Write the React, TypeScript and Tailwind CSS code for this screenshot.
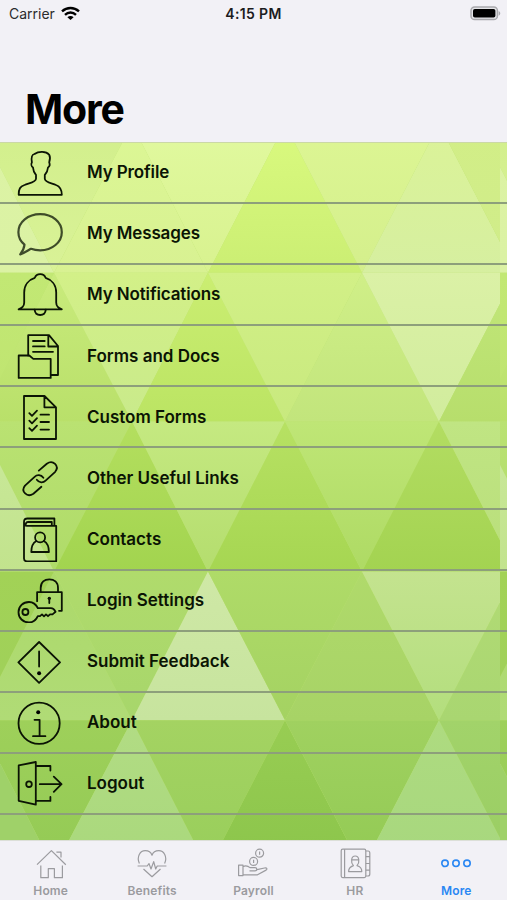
import { ReactNode } from 'react';

type Tri = [string, string, string];

// triangles of the mosaic: points, top colour, bottom colour
const tris: Tri[] = [
  ['-22,123 132,123 54,272', '#d2ef8c', '#d9f297'],
  ['-22,123 -99,272 54,272', '#dcf3a4', '#dbf2a4'],
  ['132,123 54,272 208,272', '#dcf795', '#d8f192'],
  ['132,123 285,123 208,272', '#e1f99f', '#d8f28f'],
  ['285,123 208,272 362,272', '#dafa7f', '#cbee73'],
  ['285,123 439,123 362,272', '#ddf694', '#d4ef8c'],
  ['439,123 362,272 516,272', '#dbf398', '#d6efa0'],
  ['439,123 593,123 516,272', '#d2ee87', '#d0ec8a'],
  ['54,272 -22,421 132,421', '#c9eb7c', '#b9e06a'],
  ['-22,272 54,272 -22,421', '#c2e874', '#bfe470'],
  ['54,272 208,272 132,421', '#d3f088', '#c9ea8b'],
  ['208,272 132,421 285,421', '#cbee72', '#bbe463'],
  ['208,272 362,272 285,421', '#d2f087', '#c8e97e'],
  ['362,272 285,421 439,421', '#d0ef88', '#c2e57c'],
  ['362,272 516,272 439,421', '#dbf1a6', '#d1ec9d'],
  ['516,272 439,421 593,421', '#c2e77a', '#b7de6c'],
  ['-22,421 132,421 54,571', '#bae272', '#afdb69'],
  ['-22,421 -99,571 54,571', '#cae99b', '#c2e38d'],
  ['132,421 54,571 208,571', '#b4df5f', '#a2d44f'],
  ['132,421 285,421 208,571', '#c5e981', '#b4dd6e'],
  ['285,421 208,571 362,571', '#b7e163', '#a6d652'],
  ['285,421 439,421 362,571', '#bfe676', '#aeda64'],
  ['439,421 362,571 516,571', '#b3dd62', '#a3d351'],
  ['439,421 593,421 516,571', '#c0e583', '#b9de7b'],
  ['54,571 -22,720 132,720', '#acd96a', '#b0db76'],
  ['-99,571 54,571 -22,720', '#a2d256', '#9fd05b'],
  ['54,571 208,571 132,720', '#b0db6c', '#a7d66b'],
  ['208,571 132,720 285,720', '#cfe8a6', '#c7e49e'],
  ['208,571 362,571 285,720', '#afdb68', '#a4d262'],
  ['362,571 285,720 439,720', '#b0da6b', '#a7d366'],
  ['362,571 516,571 439,720', '#c4e38f', '#b3de7d'],
  ['516,571 439,720 593,720', '#b2db75', '#a9d671'],
  ['-22,720 132,720 54,869', '#9ed05a', '#93ca55'],
  ['-22,720 -99,869 54,869', '#9fd169', '#9fd169'],
  ['132,720 54,869 208,869', '#b2dc84', '#a9d87c'],
  ['132,720 285,720 208,869', '#a4d362', '#98ce5b'],
  ['285,720 208,869 362,869', '#98cd53', '#8bc54b'],
  ['285,720 439,720 362,869', '#a0d160', '#92ca54'],
  ['439,720 362,869 516,869', '#aedb80', '#a7d77e'],
  ['439,720 593,720 516,869', '#a2d36a', '#99cd63'],
];

function Mosaic() {
  return (
    <svg className="absolute inset-0 h-full w-full" viewBox="0 142 507 698" preserveAspectRatio="none" aria-hidden="true">
      <defs>
        {tris.map(([, from, to], i) => (
          <linearGradient key={i} id={`g${i}`} x1="0" y1="0" x2="0" y2="1">
            <stop offset="0" stopColor={from} />
            <stop offset="1" stopColor={to} />
          </linearGradient>
        ))}
        <clipPath id="tile">
          <rect x="0" y="123" width="500" height="746" />
        </clipPath>
        <g id="mosaic" clipPath="url(#tile)">
          {tris.map(([points], i) => (
            <polygon key={i} points={points} fill={`url(#g${i})`} />
          ))}
        </g>
      </defs>
      <rect x="0" y="123" width="507" height="746" fill="#bce26f" />
      <use href="#mosaic" />
      <use href="#mosaic" x="500" />
    </svg>
  );
}

const items: { label: string; icon: ReactNode }[] = [
  {
    label: 'My Profile',
    icon: (
      <path d="M1.7 44.8C1.7 39 3 36.6 7.5 35C12 33.2 19 32.4 19 28.8V25C17 23 16.2 20.5 16 17.5C14.3 16.5 14 14 14.9 12.4C13.8 6 15.2 4.7 17.5 4C21.5 1.2 29 .9 32.2 4.8C33.4 7 33 10 32.2 12.4C33 14.4 32.5 16.6 31 17.5C30.7 20.6 29.6 23.2 27.8 25V28.8C27.8 32.4 35 33.2 39 35C43.4 36.7 44.8 39.3 44.8 44.8Z" />
    ),
  },
  {
    label: 'My Messages',
    icon: (
      <path className="opacity-75" strokeWidth="2.2" d="M7.5 33.6C3.5 30.3 1.4 26 1.4 21.2C1.4 11.2 11 3.2 23.2 3.2S44.8 11.2 44.8 21.2S35.2 39.3 23.2 39.3C19.7 39.3 16.7 38.8 14 37.8C11.2 39.3 7.6 41.9 3.2 43.4C5.8 40 7.2 37 7.5 33.6Z" />
    ),
  },
  {
    label: 'My Notifications',
    icon: (
      <>
        <path d="M1.6 37.3H44.8C41.5 35.7 39.2 34.6 39.2 30.5V20.5C39.2 12.8 34.5 7.6 28.6 5.8C27.6 3.2 25.8 2.2 23.2 2.2S18.8 3.2 17.8 5.8C11.9 7.6 7.2 12.8 7.2 20.5V30.5C7.2 34.6 4.9 35.7 1.6 37.3Z" />
        <path d="M17.6 37.6C18 41.2 20 43 23.2 43S28.4 41.2 28.8 37.6" />
      </>
    ),
  },
  {
    label: 'Forms and Docs',
    icon: (
      <>
        <path d="M11.2 22.5V2.2H32L41 13V42H34M31.3 2.2V13.5H41M16 8H27.7M16 13.4H27.7M16 18.8H36" />
        <path d="M1.7 22.5H12.3L16.3 25.9H33.7V44.9H1.7Z" />
      </>
    ),
  },
  {
    label: 'Custom Forms',
    icon: (
      <path d="M7 2H27.5L39 13.3V45H7ZM27.4 2V13.3H39M12.3 19.2L15 21.8L20 16.7M12.3 26.7L15 29.3L20 24.2M12.3 34.2L15 36.8L20 31.7M23.5 20.7H32M23.5 28H32M23.5 35.6H32" />
    ),
  },
  {
    label: 'Other Useful Links',
    icon: (
      <>
        <path d="M21.8 15.6L29.8 8.7C36 4.3 42.8 11 38.2 16.8L28.6 25.6C26.2 28 22.2 28 19.8 24.7" />
        <path transform="rotate(180 23.1 23.7)" d="M21.8 15.6L29.8 8.7C36 4.3 42.8 11 38.2 16.8L28.6 25.6C26.2 28 22.2 28 19.8 24.7" />
      </>
    ),
  },
  {
    label: 'Contacts',
    icon: (
      <>
        <path d="M37.4 9.8V2.5H10.5C8.2 2.5 7 4 7 6V42.5C7 44.3 8 45.3 10 45.3H39.2V9.8H10C8 9.8 7 8.8 7 7M34.8 9.6V6H11C9.5 6 8.8 6.8 9 8" />
        <circle cx="23.1" cy="21.4" r="5" />
        <path d="M19.4 25C16.4 26.6 14.3 30.2 14.3 36H31.9C31.9 30.2 29.8 26.6 26.8 25" />
      </>
    ),
  },
  {
    label: 'Login Settings',
    icon: (
      <>
        <path d="M23.7 15V11C23.7 5 27.5 2.3 32.3 2.3S41 5 41 11V15M20.1 24.2V15.2H44.8V33.8H42" />
        <circle cx="32.3" cy="21.3" r="1.6" fill="#000" stroke="none" />
        <path d="M32.3 21V26" />
        <circle cx="8.4" cy="35" r="3" />
        <path d="M20.8 31.2C19 27.3 15.7 25 12 25C6 25 1.5 29.5 1.5 35.2S6 45.5 12 45.5C15.8 45.5 19 43.2 20.8 39.2H23L25 37.4L27 39.4L29 37.4L31 39.2L33 37.4H35.5L38.6 34.8C37 31.8 35.6 31.2 34 31.2Z" />
      </>
    ),
  },
  {
    label: 'Submit Feedback',
    icon: (
      <>
        <path d="M22.1 4L43 24.4L22.1 44.8L1.4 24.4ZM22.1 13.4V28.6" />
        <circle cx="22.1" cy="35.2" r="2" fill="#000" stroke="none" />
      </>
    ),
  },
  {
    label: 'About',
    icon: (
      <>
        <circle cx="22.1" cy="24.2" r="20.6" />
        <path d="M17.5 20.8H22.6V37.2M16 37.2H28.4" />
        <circle cx="21.2" cy="13.2" r="2" fill="#000" stroke="none" />
      </>
    ),
  },
  {
    label: 'Logout',
    icon: (
      <>
        <path d="M1.7 5.4L18.8 2V44.7L1.7 40.8ZM18.8 6H33.4V10.6M18.8 40.9H33.4V37M22.8 24.2H44.5M36.8 16.6L44.5 24.2L36.8 31.8" />
        <circle cx="12" cy="24.2" r="2.8" />
      </>
    ),
  },
];

const tabs: { label: string; icon: ReactNode; active?: boolean }[] = [
  {
    label: 'Home',
    icon: (
      <path d="M2 17.6L16.4 3.6L30.8 17.8M21.4 5.2H26V10.4M5.8 18.6V30.7H13.3V21.7H19.4V30.7H27.4V18.6" />
    ),
  },
  {
    label: 'Benefits',
    icon: (
      <>
        <path d="M3.4 16.5C.3 9.5 4.2 3.7 9.2 3.7C12.5 3.7 15 5.4 16 8.2C17 5.4 19.5 3.7 22.8 3.7C27.8 3.7 31.7 9.5 28.6 16.5M7.5 22L16 29.7L24.5 22" />
        <path d="M1.6 19H11.2L13 16.6L15 22L17.7 14.6L19.7 22L21.2 19H30.4" />
      </>
    ),
  },
  {
    label: 'Payroll',
    icon: (
      <>
        <circle cx="22.6" cy="6.2" r="4" />
        <circle cx="16.6" cy="14.4" r="4" />
        <path d="M22.6 4.6V7.8M16.6 12.8V16" />
        <path d="M1.6 18.2H6V28.6H1.6ZM6 19.6C9 18.2 11 19 13 20.6H18C20.4 20.6 20.4 23.8 18 23.8H12.5M20 22.6L27.5 21C30.3 20.6 30.6 22.4 28.6 23.4L20.5 27.8H6" />
      </>
    ),
  },
  {
    label: 'HR',
    icon: (
      <>
        <rect x="2.2" y="2.2" width="24.6" height="28.4" rx="1.5" />
        <path d="M5.6 2.2V30.6M26.8 4H29C30.3 4 30.8 4.8 30.8 6V9.6H26.8M30.8 9.6V16.5H26.8M30.8 16.5V23.2H26.8M30.8 23.2V27C30.8 28.4 30.2 29 29 29H26.8" />
        <path d="M9.6 24.6C9.6 20.6 11.5 19.6 14.4 18.6C11.5 15.6 12 9 16.2 9S20.9 15.6 18 18.6C21 19.6 22.8 20.6 22.8 24.6ZM12.6 12.8H19.8" />
      </>
    ),
  },
  {
    label: 'More',
    active: true,
    icon: (
      <g strokeWidth="1.6">
        <circle cx="5" cy="16.3" r="3.2" />
        <circle cx="16" cy="16.3" r="3.2" />
        <circle cx="27" cy="16.3" r="3.2" />
      </g>
    ),
  },
];

export default function App() {
  return (
    <div className="flex h-[900px] w-[507px] flex-col overflow-hidden bg-[#f2f1f6] font-['Inter',sans-serif] text-black">
      <header className="flex h-[142px] shrink-0 flex-col justify-between">
        <div className="grid h-[26px] grid-cols-3 items-center pl-[9px] pr-[6px] text-[14px]">
          <div className="flex items-center gap-1.5 text-[#2b2b2d]">
            <span>Carrier</span>
            <svg width="19" height="15" viewBox="0 0 19 15" fill="none" stroke="#000" strokeWidth="2.4" aria-hidden="true">
              <path d="M1 5.4C6 .8 13 .8 18 5.4M4 8.8C7.2 5.8 11.8 5.8 15 8.8" />
              <path d="M9.5 14L6.4 11.2C8.2 9.6 10.8 9.6 12.6 11.2Z" fill="#000" stroke="none" />
            </svg>
          </div>
          <span className="-ml-[3px] text-center font-semibold tracking-[0.35px] text-[#1c1c1e]">4:15 PM</span>
          <svg className="justify-self-end" width="31" height="15" viewBox="0 0 31 15" aria-hidden="true">
            <rect x="1" y="1" width="26.4" height="12.6" rx="3.6" fill="#e5e5e8" stroke="#a9a9ad" strokeWidth="1.5" />
            <rect x="3" y="3" width="22.4" height="8.6" rx="1.8" />
            <path d="M28.6 5V9.8C30.8 8.8 30.8 6 28.6 5Z" fill="#a9a9ad" />
          </svg>
        </div>
        <h1 className="pb-[9px] pl-[25px] text-[41px] leading-[48px] font-bold tracking-[-1.2px]">More</h1>
      </header>

      <main className="relative h-[698px] shrink-0 overflow-hidden border-t border-[#cbd8a6]">
        <Mosaic />
        <ul className="relative">
          {items.map((item) => (
            <li key={item.label} className="flex h-[61.1px] items-center border-b-2 border-[#8d9f7b] pl-[17px]">
              <svg width="46" height="46" viewBox="0 0 46 46" fill="none" stroke="#0b1404" strokeWidth="1.8" strokeLinecap="round" strokeLinejoin="round" aria-hidden="true">
                {item.icon}
              </svg>
              <span className={item.label.startsWith('My') ? 'ml-6 pt-px text-[17px] font-semibold tracking-[-0.13px] text-[#0b1404]' : 'ml-6 pt-px text-[17px] font-semibold text-[#0b1404]'}>{item.label}</span>
            </li>
          ))}
        </ul>
      </main>

      <nav className="grid h-[60px] shrink-0 grid-cols-5 border-t border-[#dcdfd8]">
        {tabs.map((tab) => (
          <div key={tab.label} className={tab.active ? 'flex flex-col items-center pt-1.5 text-[#2a87f3]' : 'flex flex-col items-center pt-1.5 text-[#9b9b9f]'}>
            <svg width="32" height="32" viewBox="0 0 32 32" fill="none" stroke="currentColor" strokeWidth="1.2" strokeLinejoin="round" aria-hidden="true">
              {tab.icon}
            </svg>
            <span className="mt-1 text-[12px] leading-4 font-semibold tracking-[0.15px]">{tab.label}</span>
          </div>
        ))}
      </nav>
    </div>
  );
}
